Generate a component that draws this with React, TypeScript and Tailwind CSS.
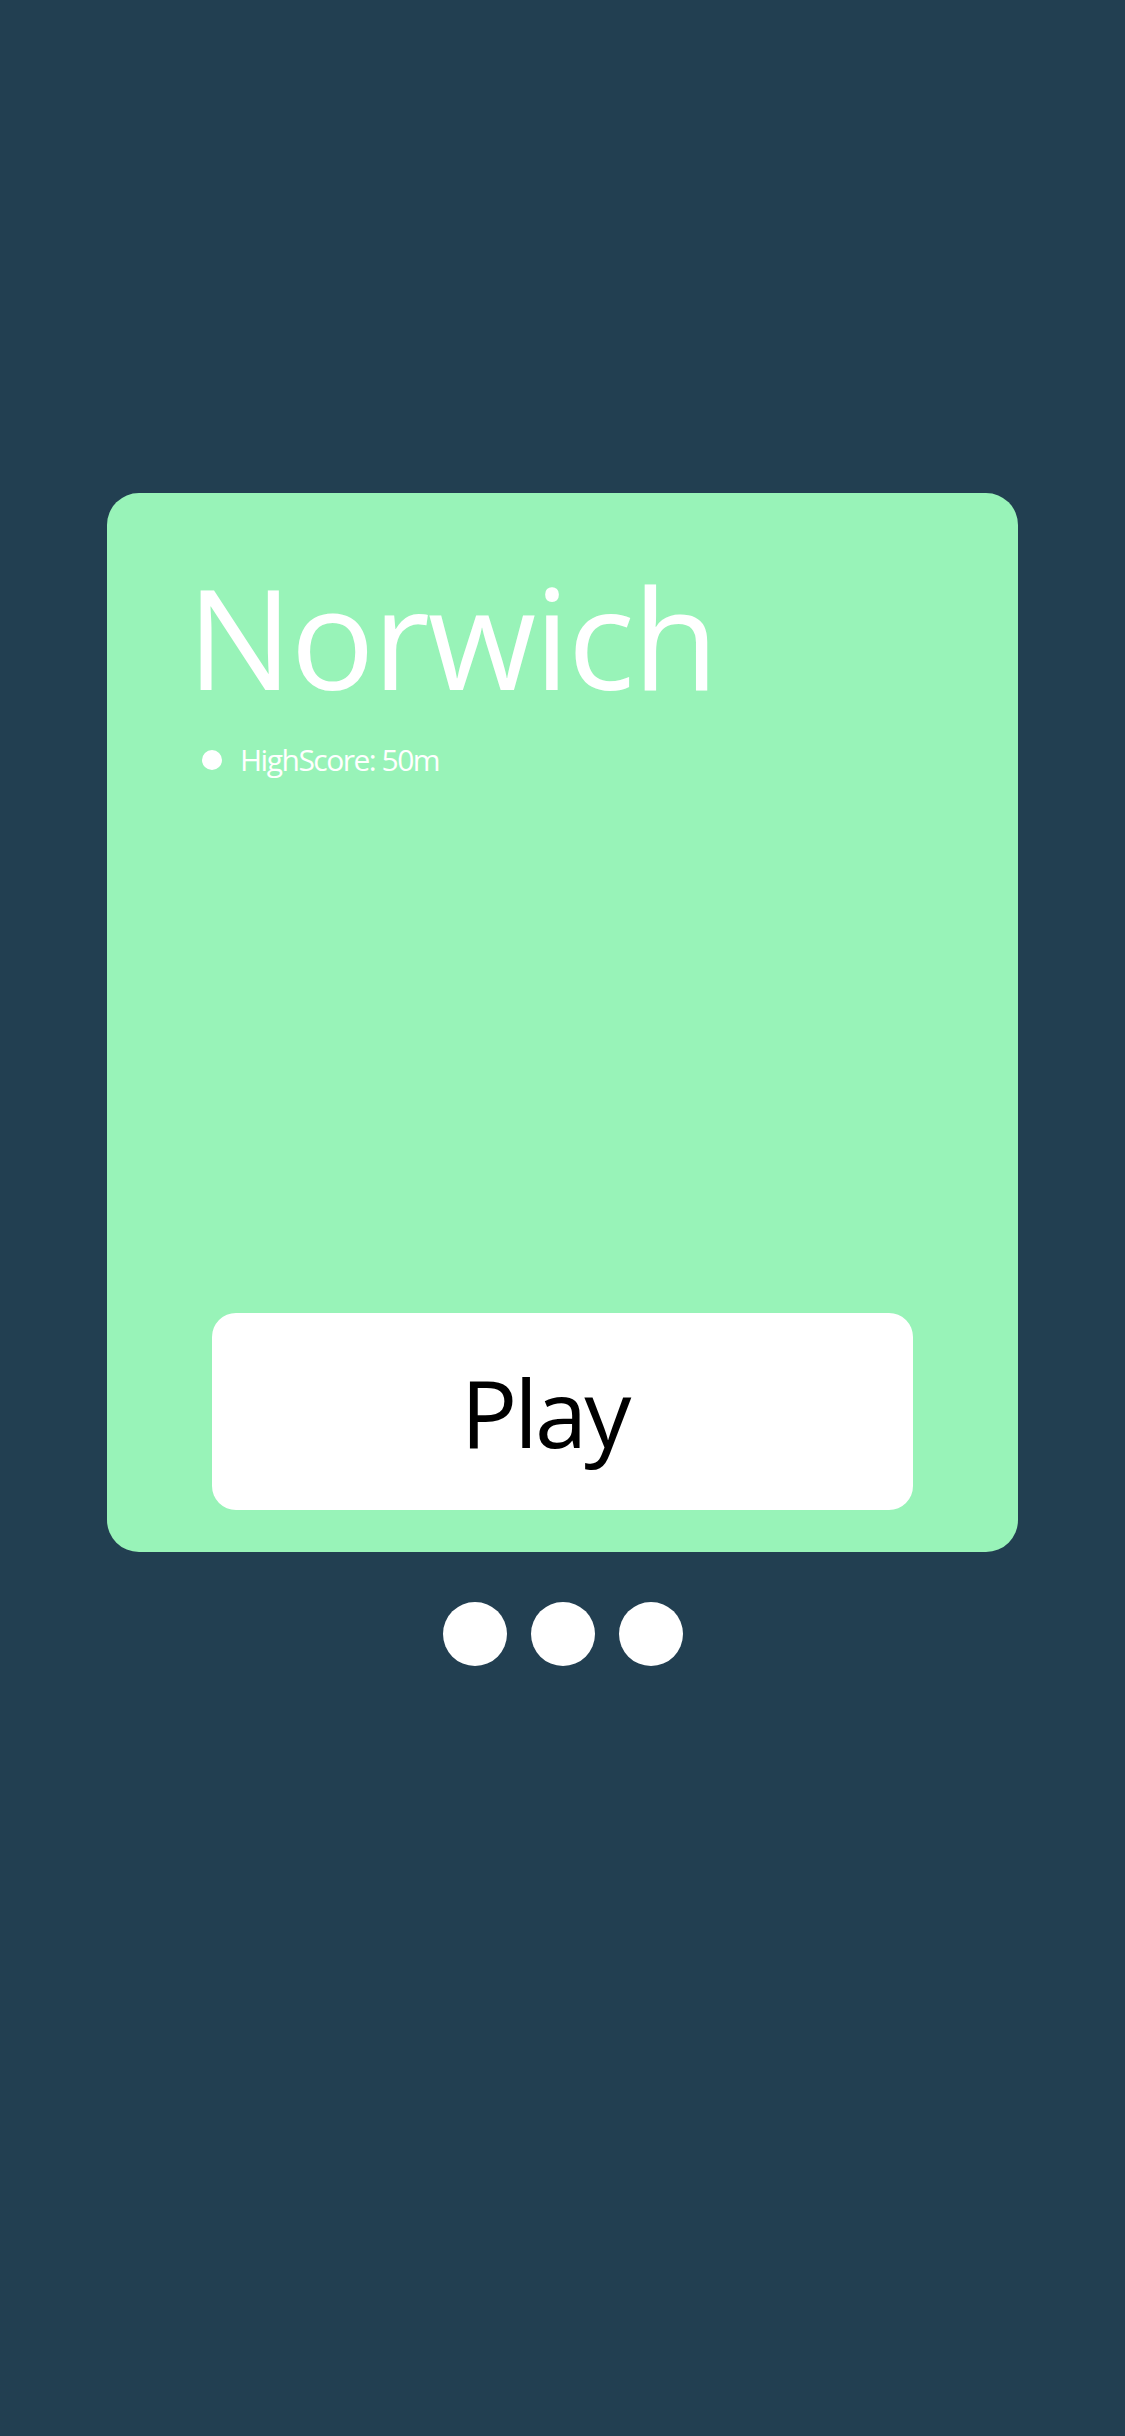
export default function App() {
  return (
    <main
      className="flex min-h-screen flex-col items-center bg-[#223f51] pt-[493px]"
      style={{ fontFamily: '"Open Sans", "Noto Sans", sans-serif' }}
    >
      <section className="flex h-[1059px] w-[911px] flex-col rounded-[32px] bg-[#98f3b8] pb-[42px]">
        <h1 className="mt-[73px] pl-[80px] text-[140px] leading-none font-normal tracking-[-2px] text-white">
          Norwich
        </h1>

        <ul className="mt-[39px] pl-[95px]">
          <li className="flex items-center gap-[18px] text-[30px] leading-none tracking-[-1.5px] text-white">
            <span className="h-[20px] w-[20px] rounded-full bg-white" />
            HighScore: 50m
          </li>
        </ul>

        <button className="mx-auto mt-auto flex h-[197px] w-[701px] items-center justify-center rounded-[24px] bg-white pr-[36px] text-[94px] leading-none tracking-[-3px] text-black">
          Play
        </button>
      </section>

      <div className="mt-[50px] flex gap-[24px]">
        {[0, 1, 2].map((i) => (
          <span key={i} className="h-[64px] w-[64px] rounded-full bg-white" />
        ))}
      </div>
    </main>
  );
}
